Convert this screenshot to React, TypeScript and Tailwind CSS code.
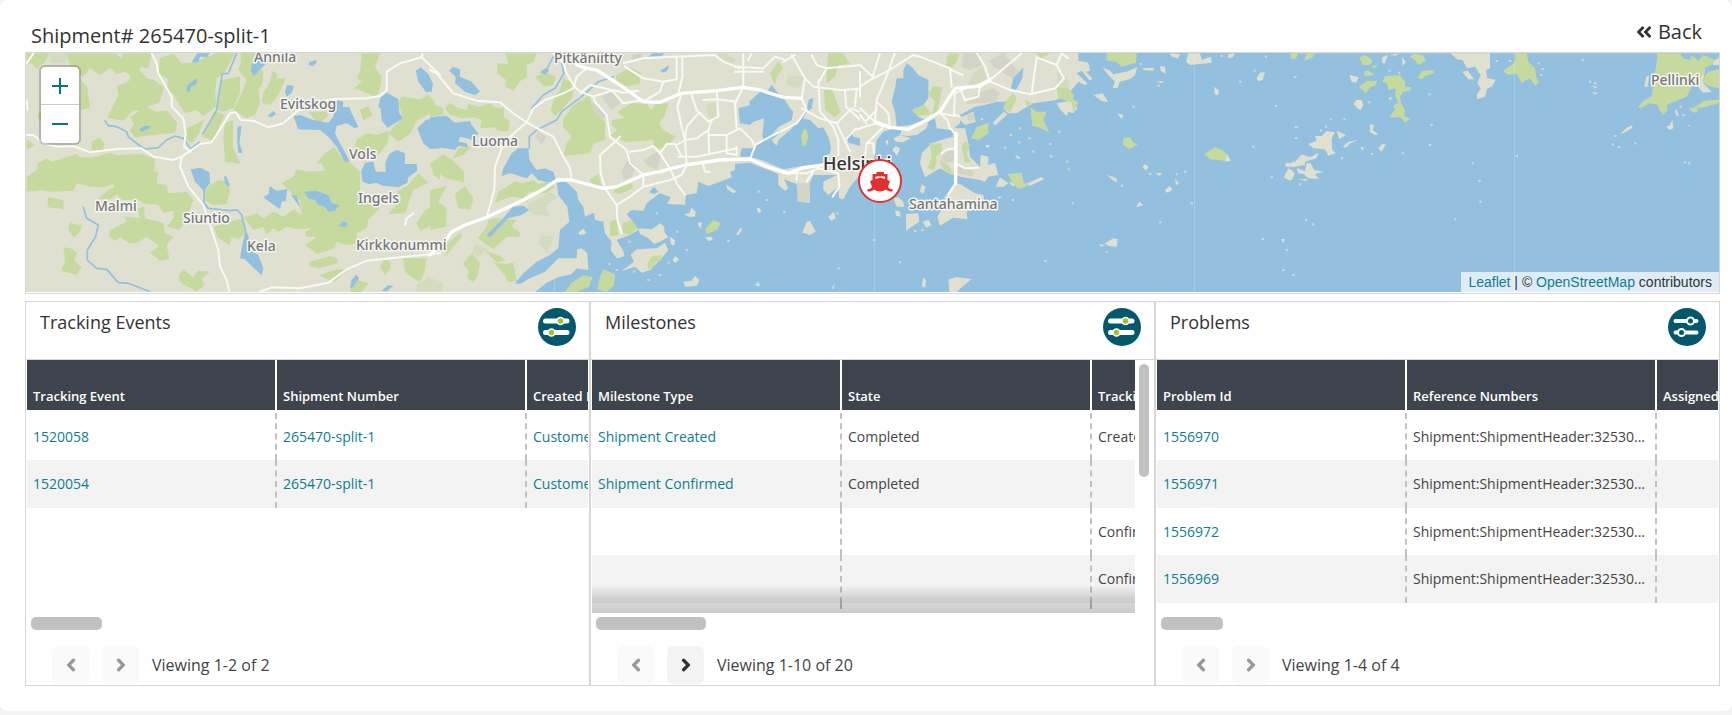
import { useState } from 'react';
import { FaAngleDoubleLeft, FaChevronLeft, FaChevronRight } from 'react-icons/fa';

interface MapTile {
  transform: string;
  water?: string[];
  land?: string[];
  urban?: string[];
  park?: string[];
  forest?: string[];
  lakes?: string[];
  rivers?: string[];
  roads?: string[];
  highways?: string[];
  islets?: number[][];
}

interface Cell {
  text: string;
  link?: boolean;
}

interface GridPanelProps {
  title: string;
  columns: string[];
  rows: Cell[][];
  summary: string;
  filtered?: boolean;
  hasNext?: boolean;
  overflowing?: boolean;
  thumbWidth: string;
}

// every tile is drawn at three units per pixel
const tiles: MapTile[] = [
  {
    transform: 'scale(.33333)',
    forest: [
      '80,160 150,160 135,185 110,207 95,190 80,195',
      '200,160 345,160 365,175 370,160 455,160 445,205 425,200 400,235 375,215 350,222 330,205 300,225 270,205 250,232 215,200 205,185',
      '243,240 262,262 270,325 243,330',
      '350,258 385,245 400,208 425,215 438,235 462,240 492,262 478,308 438,322 432,335 400,330 370,362 322,354 345,305 355,285',
      '390,350 440,320 470,335 500,330 532,370 525,398 485,402 405,412 388,392 402,372',
      '480,175 520,160 545,190 580,187 610,175 650,160 705,160 672,220 650,235 645,282 650,318 610,348 590,330 555,340 520,285 500,265 505,238 475,220',
      '722,160 765,160 760,205 790,210 788,250 775,270 780,310 765,345 740,355 700,330 725,280 740,240 715,210 722,190',
      '665,240 720,230 720,280 700,325 670,335 652,330 655,290',
      '790,278 810,245 818,212 832,222 830,235 857,235 835,285 810,315 785,308',
      '112,340 150,330 165,360 118,362',
      '80,418 105,435 80,450',
      '275,425 300,412 312,428 310,452 275,450',
      '560,385 612,360 598,400 575,430 555,415',
      '608,410 645,332 675,345 660,375 640,422',
      '675,370 698,360 700,400 698,440 722,492 675,485 670,410',
      '80,530 110,510 112,490 140,475 155,485 230,462 240,472 280,472 330,458 350,465 425,462 465,475 462,510 475,520 470,550 500,555 505,580 560,575 580,600 565,640 540,690 500,680 520,655 520,632 490,638 475,615 430,610 415,600 365,600 345,575 340,552 310,562 270,560 230,550 220,572 150,575 130,570 80,575',
      '145,592 190,600 192,628 142,622',
      '325,570 348,558 357,578 330,598 295,597',
      '210,665 222,672 245,675 240,695 222,713 205,688',
      '190,742 212,745 232,760 222,780 245,800 230,825 183,812 195,785',
      '330,690 380,665 375,650 420,655 412,625 432,620 435,655 490,668 495,700 520,710 500,735 508,778 480,782 450,758 478,738 440,710 412,728 390,730 360,712 345,722 327,710',
      '540,820 550,808 580,832 595,812 630,815 605,835 612,858 590,875 545,850 535,835',
      '630,555 655,540 685,545 690,575 680,612 640,615 612,600 615,572',
      '642,680 665,672 730,655 738,700 715,718 695,712 688,735 652,712',
      '730,652 770,640 790,655 820,635 850,650 880,628 905,645 900,600 865,570 845,550 880,530 890,508 925,515 975,512 965,490 950,492 970,465 1002,440 1025,472 1042,480 1080,515 1080,585 1100,605 1140,625 1105,660 1100,685 1070,700 1075,730 1040,735 1010,725 1005,745 950,762 915,735 950,712 920,710 915,695 935,685 890,688 860,680 835,695 820,685 800,705 790,680 760,690 745,670',
      '930,785 990,768 1012,775 1012,790 955,805 928,798',
      '958,825 1010,808 1045,808 1005,845 985,840',
      '1140,800 1155,775 1172,785 1170,808 1155,825',
      '1210,775 1280,775 1275,812 1260,845 1240,835 1215,815',
      '1055,835 1105,850 1085,876 1050,876',
      '925,335 980,335 985,348 955,372',
      '1070,420 1098,400 1130,405 1165,392 1165,425 1140,460 1115,475 1082,475 1060,455',
      '1080,330 1105,318 1118,345 1090,360',
      '1085,160 1140,160 1125,200 1145,230 1142,258 1130,292 1080,270 1060,267 1085,245 1070,235 1080,215',
      '1195,310 1205,290 1260,298 1285,285 1305,305 1302,335 1250,362 1232,400 1195,425 1165,400 1185,375 1210,355',
      '1290,490 1320,470 1320,540 1300,525',
      '1165,642 1205,595 1190,575 1225,555 1255,520 1285,548 1240,570 1225,610 1215,640',
      '1250,670 1275,630 1320,610 1320,665 1260,692',
    ],
    park: ['150,160 200,160 200,190 150,187', '1245,860 1285,830 1320,845 1320,876 1250,876'],
    lakes: [
      '572,508 602,503 628,517 630,550 612,573 585,545',
      '672,530 678,528 690,555 684,560 675,550',
      '735,700 745,705 750,750 775,765 790,805 785,826 757,800 735,778 720,775 725,745',
      '790,592 806,582 808,558 830,572 862,567 858,602 845,605 840,628 818,612',
      '872,583 890,588 902,625 888,605',
      '912,575 950,572 985,585 995,610 1018,615 1005,632 985,635 975,620 955,615 945,600 925,595',
      '1015,677 1030,663 1045,672 1035,682',
      '880,348 900,345 940,360 985,368 1000,350 1012,300 1030,305 1028,320 1048,322 1055,340 1075,380 1065,385 1040,370 1010,378 1005,400 1020,430 1050,485 1035,485 1010,440 985,410 960,390 895,388',
      '1095,488 1120,485 1127,515 1158,515 1155,490 1168,462 1190,450 1215,460 1215,492 1250,492 1252,512 1225,532 1222,548 1195,562 1150,557 1128,548 1108,553 1088,545 1083,515',
      '1142,292 1160,278 1195,297 1198,340 1210,355 1163,383 1145,362 1142,325 1135,320',
      '1252,385 1278,360 1320,348 1320,445 1290,447 1270,430 1262,412',
      '1247,212 1262,202 1285,222 1298,250 1295,272 1280,278 1255,245',
      '928,186 948,180 950,188 938,198 925,195',
      '862,255 882,257 875,278 860,290 855,275',
      '803,347 820,333 828,342 815,352',
      '755,192 780,180 800,188 762,228 753,215',
      '560,272 562,255 592,233 590,252 572,262 570,277',
      '580,178 592,160 628,160 622,172 600,170 595,187 575,187',
      '418,388 432,378 452,378 445,387 425,395',
      '1050,865 1055,840 1068,824 1078,834 1060,860',
      '1145,872 1165,855 1180,858 1160,874',
      '712,380 724,378 722,400 718,430 728,460 715,458 712,430',
    ],
    rivers: [
      '315,362 325,377 350,380 380,395 385,410 412,432 435,447 475,443 500,420 525,408 550,415 572,447 598,427',
      '710,160 685,220 667,222 655,290 650,330 630,365 608,402',
      '250,622 260,655 295,675 287,710 262,750 262,780 290,805 320,808 355,848 385,850 450,875',
      '612,570 612,610 625,625 690,632 712,630 725,645 740,705',
    ],
    roads: [
      '455,160 470,190 475,220 515,290 515,320 550,355 557,400 552,440 572,455',
      '80,405 100,405 130,430 170,440 220,438 270,457 350,447 425,445 460,470 520,480 545,470 600,432 635,427 665,380 690,340 708,337 722,360 760,362 805,382 850,370 890,335 940,310 1000,297 1100,295 1140,288 1160,270 1160,215 1200,190 1265,172 1268,160',
      '1265,172 1320,225',
      '545,470 540,500 565,560 610,615 635,690 655,750 660,800 680,840 688,875',
      '780,875 815,862 900,865 985,848 1040,808 1100,782 1200,772 1320,760',
      '1215,675 1220,655 1240,640',
      '80,190 100,160',
      '80,300 82,330',
    ],
  },
  {
    transform: 'translate(430 40) scale(.33333)',
    water: [
      '315,756 350,728 385,712 425,702 440,685 475,690 472,640 455,625 442,628 440,655 385,655 345,695 300,715 270,732 255,730 280,700 320,665 360,645 385,625 390,570 418,545 412,500 385,465 380,430 405,422 440,455 445,480 460,500 465,530 492,518 495,540 520,545 525,580 545,605 542,630 560,655 580,640 575,625 560,600 600,585 625,570 612,550 590,522 605,510 640,512 650,490 690,460 722,472 712,492 765,494 768,465 800,460 805,425 835,438 870,425 905,412 900,395 915,390 915,372 960,368 1010,388 1045,402 1045,435 1065,452 1075,445 1062,418 1100,432 1105,485 1140,488 1138,432 1150,405 1220,405 1180,425 1180,450 1195,465 1225,440 1227,475 1240,478 1260,440 1290,405 1320,405 1320,756',
      '930,350 935,325 970,325 985,310 1050,270 1075,270 1100,250 1115,235 1140,240 1165,265 1180,262 1195,290 1203,320 1200,340 1180,350 1180,372 1120,378 1060,388 1000,362 960,350',
      '925,205 960,195 958,185 990,155 1010,155 1025,135 1045,160 1065,180 1080,205 1090,215 1085,240 1045,262 1005,310 997,290 1002,235 970,245 960,255 930,250',
    ],
    land: [
      '625,565 665,568 690,550 703,560 703,575 715,592 690,605 672,612 655,595 630,582',
      '575,693 612,665 602,645 620,628 680,625 705,608 715,630 695,655 660,690 635,698 615,680',
      '550,615 580,632 583,648 562,655',
      '445,578 460,566 470,580 450,586',
      '720,590 735,600 733,617 722,612',
      '728,660 735,648 748,658 735,670',
      '760,725 785,722 795,708 808,720 800,738 765,740',
      '762,522 778,520 785,503 797,515 795,530 775,530',
      '802,550 815,547 812,567',
      '825,592 845,590 848,600 835,603',
      '888,433 920,455 910,460 892,448',
      '980,505 990,505 993,515 985,520',
      '1117,578 1130,545 1140,543 1157,575 1140,585 1125,580',
      '1195,530 1212,515 1217,535 1203,542',
      '975,737 983,725 992,738',
      '918,585 932,563 937,568 925,585',
      '1205,745 1215,730 1210,748',
      '1025,300 1060,270 1090,262 1045,300 1040,318',
    ],
    urban: [
      '515,170 545,155 575,185 545,210',
      '470,215 490,190 530,225 500,255',
      '315,290 325,275 350,290 335,315',
      '640,360 680,335 692,350 680,390 650,375',
      '575,395 595,355 618,380 605,410 580,420',
      '1102,430 1138,430 1138,488 1102,485',
      '605,45 635,40 640,55 605,65',
    ],
    park: [
      '290,495 360,455 383,470 345,500 360,530 305,520',
      '825,195 860,185 860,240 840,240',
      '325,610 335,585 372,590 350,640',
      '1070,105 1125,110 1105,145 1070,135',
      '125,640 135,615 172,625 150,650',
      '0,720 40,730 35,756 0,756',
      '855,45 890,40 920,60 905,70',
    ],
    forest: [
      '200,70 235,72 225,40 320,40 312,65 290,75 292,110 272,122 250,152 225,140 228,120 202,100',
      '315,112 345,95 378,110 370,135 345,140',
      '45,205 60,188 85,205 110,210 115,192 150,200 180,190 200,205 222,202 222,230 240,245 235,275 205,272 190,262 150,265 155,240 130,232 95,235 60,225',
      '0,190 40,205 40,225 0,230',
      '5,370 40,343 70,362 102,395 103,428 50,415 10,392',
      '68,355 85,325 125,320 100,345',
      '0,450 50,438 25,485 50,505 48,560 0,570',
      '75,462 105,438 130,475 122,510 85,505',
      '362,210 375,165 390,150 400,115 432,130 428,170 400,205 375,228',
      '400,348 410,310 425,290 400,262 398,240 430,195 480,165 490,215 525,245 525,300 490,310 482,340',
      '545,240 583,235 562,215 605,190 650,192 665,210 678,190 715,190 705,225 688,250 700,270 738,290 720,310 690,328 670,318 670,300 590,307 540,288 562,270 545,255',
      '557,108 600,82 632,100 630,130 595,140 560,125',
      '478,420 505,402 515,440 490,435',
      '548,458 560,440 605,430 610,445 570,462',
      '540,545 560,538 565,585 540,588',
      '577,552 605,538 622,565 600,585 578,578',
      '195,488 205,455 255,425 280,430 310,420 325,432 350,425 376,440 350,460 300,455 280,475 245,470',
      '143,595 170,560 175,540 200,535 258,540 245,560 268,575 270,590 230,590 190,627',
      '50,612 90,578 97,588 45,650',
      '98,672 125,640 150,670 142,710 130,727 112,715 115,690',
      '165,632 215,650 227,662 200,667',
      '190,668 225,672 250,668 260,722 235,727 220,700',
      '1195,40 1240,40 1260,72 1225,75 1215,110 1190,130 1190,90',
      '1182,150 1205,145 1232,215 1215,232 1185,210',
      '1020,100 1045,65 1060,85 1040,110 1035,135',
      '1113,290 1120,268 1130,268 1135,292 1125,320 1117,315',
      '825,568 850,540 873,550 860,570 832,582',
      '652,670 668,648 695,645 695,660 675,668 665,690 655,688',
      '510,710 520,688 555,703 552,735 530,756 502,748',
      '405,756 425,728 460,706 487,712 478,740 440,756',
    ],
    lakes: [
      '215,408 220,385 245,340 265,325 295,325 298,360 320,390 345,385 370,395 378,420 372,430 345,425 325,420 305,400 290,415 265,407 240,400',
      '0,232 50,228 75,248 120,243 125,255 145,280 130,300 90,290 85,305 110,310 115,322 85,318 75,330 45,325 0,320',
      '57,92 70,80 90,88 90,110 125,125 150,155 135,165 105,155 75,130 77,110',
      '330,97 345,85 358,90 345,105',
      '655,50 668,40 705,40 695,48',
      '690,92 718,75 712,92 700,98',
      '1130,210 1137,178 1150,175 1145,205 1133,215',
      '170,585 215,540 248,500 280,497 298,510 275,525 235,535 180,592',
      '657,457 672,440 685,455 672,462',
      '1252,290 1262,275 1270,290 1302,297 1290,318 1255,308',
      '0,120 8,130 5,155 0,155',
    ],
    rivers: [
      '395,70 402,100 375,145 340,165 305,205',
      '370,50 345,97',
      '550,110 505,125 455,170 395,215 380,240 320,270 298,290 298,325',
      '1110,245 1135,205',
    ],
    roads: [
      '0,90 20,100 70,160 140,182 210,187 250,220 290,247 340,275 370,290 395,340 420,385 425,420',
      '290,247 310,205 345,180 400,160 430,145 440,110 470,85',
      '290,247 240,290 215,325 195,380 193,450 170,532',
      '370,40 400,70 410,100 430,135 450,155 490,170 550,150 580,158 625,152',
      '490,170 495,185 530,225 540,290 590,330 600,370 640,405 640,440 600,470 560,495',
      '525,445 512,400 510,345 555,305 570,290',
      '525,445 560,495 562,540 575,580',
      '450,160 480,135 545,150 580,190 640,180',
      '580,70 640,55 735,50 855,45 880,65 930,85',
      '585,80 640,115 700,125 740,118 740,50',
      '700,125 690,155 640,185',
      '757,50 757,110 745,160',
      '755,160 742,200 755,260 765,300 770,375',
      '785,165 800,210 835,245 865,230 860,150',
      '805,220 770,260 765,300 800,295 835,270 845,240',
      '835,270 838,340',
      '838,285 890,285 930,265 965,300 975,320 960,357',
      '890,285 890,340 920,345 920,320',
      '940,40 940,142 915,190 920,265',
      '820,180 860,178 920,185',
      '745,350 800,350 920,325',
      '720,385 740,430 765,465',
      '820,375 825,395 840,395',
      '640,440 720,420 755,405 770,375',
      '600,335 640,330 670,318 690,340 720,385',
      '690,340 710,312 735,312 755,350',
      '765,300 740,315',
      '975,315 1030,285 1100,250 1130,210 1115,175 1125,115 1085,45',
      '1060,65 1095,45',
      '915,80 1000,85 1035,50 1065,60',
      '915,95 1000,95',
      '955,60 965,40',
      '1125,115 1150,140 1230,150 1320,145',
      '1115,205 1170,235 1220,250 1260,335',
      '1165,120 1170,215 1210,260 1225,300 1225,345',
      '1145,45 1160,75 1190,85 1295,75 1300,40',
      '1190,85 1165,130',
      '1245,150 1248,200 1275,225 1320,265',
      '1220,250 1265,205 1320,230',
      '1295,75 1297,180 1320,215',
      '1275,200 1280,145',
      '1250,295 1275,268 1320,265',
      '1060,400 1130,400 1165,385 1225,400 1228,440 1208,470',
      '1100,395 1100,420',
      '1130,425 1150,395',
    ],
    highways: [
      '0,645 45,605 65,575 105,555 170,532 280,480 345,445 380,420 425,420 520,445 560,440 640,405 690,395 765,375 870,360 960,357 1010,380 1075,400 1120,383 1180,375',
      '440,75 470,85 500,90 570,135 640,185 690,187 755,160 860,152 940,142 990,150 1060,172 1115,175',
    ],
    islets: [[598, 605], [680, 520], [770, 630], [985, 455], [1010, 480], [1062, 515], [1225, 685], [1222, 520], [895, 603], [690, 705], [612, 695], [655, 720], [560, 690], [538, 672], [742, 575], [715, 668]],
  },
  {
    transform: 'translate(860 40) scale(.33333)',
    water: ['0,38 1320,38 1320,756 0,756'],
    land: [
      '0,38 655,38 655,62 685,68 690,92 678,95 697,115 690,122 665,92 650,100 682,130 675,135 655,125 630,155 590,180 520,190 490,207 470,220 445,220 430,205 440,185 410,185 375,195 345,200 300,225 300,250 275,270 230,265 225,235 205,245 200,265 170,285 145,288 120,285 125,272 105,265 70,275 50,300 45,345 25,395 0,400',
      '275,265 315,265 325,310 330,350 345,365 360,380 362,345 385,350 385,375 405,368 415,405 385,410 375,425 360,420 310,412 270,402 240,385 215,400 195,412 180,370 185,340 215,310 260,295 280,290',
      '255,470 275,440 285,430 300,432 345,460 370,465 375,500 320,515 322,538 280,533 240,557 232,530 245,510',
      '285,240 340,215 347,245 315,255 300,240',
      '398,248 432,215 443,222 405,257',
      '100,295 120,285 152,295 130,307 108,305',
      '97,330 107,318 120,325 112,348',
      '75,302 85,300 82,318',
      '180,455 185,433 197,440 190,462',
      '100,475 115,472 130,485 133,500 110,500',
      '105,510 120,515 122,530 108,527',
      '138,522 175,520 178,545 155,560 138,572',
      '187,545 205,540 215,555 200,563',
      '408,440 420,412 445,430 430,440',
      '445,425 465,430 460,440',
      '498,432 545,410 552,418 510,437',
      '185,738 190,712 198,720 195,743',
      '268,756 265,718 290,712 335,717 310,737 290,756',
      '590,190 645,180 652,205 640,220 625,215 620,228 600,208',
      '727,82 750,92 760,103 800,95 832,82 825,105 810,117 780,125 772,145 758,143 765,125 745,105',
      '700,165 728,160 745,187 725,183',
      '848,85 880,83 882,92 850,90',
      '900,78 915,80 917,102 902,92',
      '978,65 985,40 1020,40 1025,60 1052,50 1055,68 990,75',
      '930,40 960,42 955,55 935,50',
      '1105,42 1125,40 1118,52 1105,55',
      '1063,140 1077,152 1073,167 1063,160',
      '1190,115 1200,98 1215,97 1208,120 1195,124',
      '742,405 770,415 770,428 755,418',
      '915,450 930,438 937,450 920,458',
      '828,502 838,485 850,495',
      '735,610 760,595 773,598 770,620 745,618',
      '718,612 738,616 722,620',
      '735,633 747,635 738,638',
      '847,380 855,373 865,380 858,392',
      '885,400 905,398 900,408',
      '890,125 912,122 905,130',
      '945,415 957,432 948,434',
      '772,220 790,225 785,238',
      '465,343 483,355 472,357',
      '568,345 578,347 573,355',
      '375,315 390,315 382,325',
      '1275,370 1297,368 1290,382 1278,380',
      '1272,412 1285,385 1305,397 1290,422',
      '1297,362 1320,350 1320,370 1300,370',
      '1263,597 1275,597 1270,610',
      '1100,340 1112,362 1095,365',
      '410,470 427,470 417,476',
      '140,148 155,145 148,158',
    ],
    urban: [
      '305,80 310,40 360,40 370,75 330,90',
      '388,62 430,38 475,95 465,120 440,105 400,78',
      '318,192 350,160 400,145 420,160 405,187',
      '245,360 250,335 285,330 285,362 262,370',
      '285,375 345,395 335,410 290,400',
      '320,225 340,220 345,240 325,245',
    ],
    park: ['325,130 345,95 370,80 380,120 330,140', '590,95 605,95 630,130 620,150 592,145'],
    forest: [
      '790,295 810,292 820,308 833,313 810,328 790,315',
      '1033,342 1065,322 1088,330 1100,345 1095,362 1050,358',
      '443,402 485,398 490,425 503,438 475,447 455,425',
      '513,225 513,203 530,215 560,215 550,240 568,277 535,262 517,258',
      '333,295 350,262 385,248 385,280 355,300',
      '740,38 830,38 828,68 785,80 768,65 740,62',
      '258,78 260,50 270,38 298,42 290,65 275,82',
      '203,162 220,138 247,142 240,180 228,225 215,225 225,185',
      '153,210 195,195 212,222 175,228',
      '208,310 245,310 245,335 228,350 230,365 222,390 203,385 215,350',
      '305,320 315,303 330,315 320,345 332,365 315,368',
      '238,360 265,375 282,405 250,390',
      '430,203 440,180 460,158 470,178 450,217',
      '590,142 625,145 642,165 637,182 655,185 640,220 635,187 595,175',
      '525,38 572,38 545,57',
      '495,180 515,190 500,200',
      '1290,50 1310,38 1315,55',
    ],
    lakes: [
      '453,145 460,115 490,82 487,115 468,150',
      '95,185 105,145 110,115 130,115 130,90 140,70 155,80 175,105 205,120 205,175 190,195 155,210 175,230 195,240 150,255 110,260 105,215',
    ],
    roads: [
      '0,140 30,120 80,95 160,45 180,50 270,85 275,140',
      '105,38 85,95 50,180 45,245',
      '60,38 38,110 0,75',
      '350,38 375,80 390,125 450,150 510,163 585,145 612,115 590,75 530,52 515,160',
      '270,88 308,105',
      '590,75 605,40 625,55',
      '285,145 282,222 300,230',
      '300,145 315,180 355,170 360,135',
      '317,145 285,160',
      '355,135 400,112 485,40',
      '240,220 262,240 270,265 290,285',
      '287,370 315,385 355,383',
      '245,340 262,328 287,325',
      '0,265 50,250 70,262 20,310 15,350',
      '50,185 85,220 90,262',
      '0,205 45,245',
      '0,225 20,250',
      '20,240 50,210',
      '0,95 0,170',
      '20,310 40,310 42,340',
      '287,430 265,465',
      '240,220 285,228',
    ],
    highways: ['45,245 90,262 145,268 200,240 240,215 285,145 360,138 390,120', '288,280 287,430'],
    islets: [[435, 323], [452, 285], [508, 295], [598, 275], [478, 307], [622, 365], [626, 388], [820, 200], [786, 437], [638, 490], [995, 490], [1180, 320], [1247, 198], [1205, 107], [1183, 92], [1217, 50], [1085, 48], [975, 395], [870, 402], [480, 265], [365, 237], [900, 547], [556, 663], [42, 600], [120, 667], [1208, 597], [1270, 690], [1307, 292], [1310, 262], [1235, 412], [1280, 630], [570, 312], [520, 335], [895, 137], [842, 72], [1140, 125], [187, 570], [165, 573], [458, 480], [950, 403]],
  },
  {
    transform: 'translate(1290 0) scale(.33333)',
    water: ['10,160 1290,160 1290,876 10,876'],
    land: [
      '482,160 600,160 600,205 588,210 592,235 617,240 605,260 592,265 585,290 562,297 560,285 572,265 562,250 572,225 555,200 530,205 518,180 500,178',
      '517,215 533,212 552,238 535,238',
      '55,432 80,422 75,408 95,408 110,393 135,397 125,415 127,450 137,460 115,467 105,448 70,445',
      '0,490 15,485 35,463 60,472 85,458 80,475 45,485 45,495 5,502',
      '20,505 45,513 50,490 62,490 72,510 102,515 75,522 87,537 55,535 40,522 25,520',
      '0,508 14,522 5,540 0,538',
      '140,393 168,405 148,417',
      '158,440 175,425 205,420 180,430 168,443',
      '212,440 222,443 217,453',
      '178,225 207,232 198,248 185,245',
      '190,312 198,300 215,300 220,315 212,330 205,328',
      '240,373 252,375 248,390 265,403 255,405 240,397',
      '265,445 275,433 288,433 275,455',
      '276,172 295,165 288,180 285,190 277,190',
      '337,170 347,187 337,197',
      '295,295 305,290 303,302',
      '990,403 1010,383 1028,375 1025,385 1000,400',
      '1128,378 1138,378 1147,360 1150,385 1138,390',
      '1155,330 1160,328 1167,348 1160,347',
      '1063,260 1068,230 1077,228 1073,260',
      '902,258 922,260 918,265',
      '905,277 922,278 918,284',
      '1230,205 1245,205 1240,250 1265,275 1240,278 1225,262',
      '1265,185 1290,172 1290,195 1270,195',
      '10,228 22,230 15,235',
      '12,380 27,378 18,386',
      '25,538 50,537 50,543',
      '1190,375 1203,375 1195,378',
      '300,165 328,160 315,167',
    ],
    forest: [
      '208,172 225,165 247,180 240,195 218,195',
      '222,215 235,210 252,225 225,228',
      '242,200 262,193 255,205',
      '207,260 230,243 262,242 255,258 240,262 228,280',
      '277,245 285,228 330,226 345,245 345,260 363,262 360,272 340,275 330,290 333,308 345,330 343,350 362,355 345,368 332,352 297,352 315,330 310,317 325,308 315,285 318,265 295,270 290,250',
      '360,170 370,162 400,165 407,182 385,195 375,180',
      '383,235 395,213 430,210 432,220 405,228 397,238',
      '640,212 665,195 678,180 675,160 710,160 715,185 735,205 740,235 747,245 737,258 720,235 695,248 680,220 655,225',
      '1103,160 1170,160 1180,175 1200,180 1205,165 1225,182 1240,165 1270,178 1272,190 1245,205 1240,225 1205,260 1190,290 1130,315 1133,328 1120,345 1105,325 1103,315 1080,310 1050,325 1045,320 1060,303 1085,288 1090,255',
      '1235,240 1255,215 1290,207 1290,265 1255,258',
      '1215,320 1240,303 1290,298 1285,310 1230,325',
      '1198,325 1222,320 1222,335 1210,338',
      '0,160 25,160 18,175 5,178',
      '43,182 50,160 75,160 68,172',
    ],
    islets: [[418, 283], [620, 183], [878, 180], [420, 435], [548, 490], [680, 468], [568, 543], [571, 605], [495, 658], [48, 660], [68, 673], [1036, 430], [968, 434], [987, 441], [1185, 487], [1197, 490], [976, 408], [745, 190], [757, 207], [900, 245], [122, 358], [163, 358], [237, 307], [298, 212], [327, 218], [18, 414], [155, 475], [245, 462], [30, 553], [10, 825], [915, 250], [1172, 320], [1180, 345], [338, 460], [424, 375], [660, 183], [753, 225], [108, 380], [92, 392]],
  },
];

const labels = [
  { name: 'Annila', x: 254, y: 62 },
  { name: 'Evitskog', x: 280, y: 109 },
  { name: 'Vols', x: 349, y: 159 },
  { name: 'Ingels', x: 358, y: 203 },
  { name: 'Malmi', x: 95, y: 211 },
  { name: 'Siuntio', x: 183, y: 223 },
  { name: 'Kela', x: 247, y: 251 },
  { name: 'Kirkkonummi', x: 356, y: 250 },
  { name: 'Luoma', x: 472, y: 146 },
  { name: 'Pitkäniitty', x: 554, y: 63 },
  { name: 'Santahamina', x: 909, y: 209 },
  { name: 'Pellinki', x: 1651, y: 85 },
];

const trackingRows: Cell[][] = [
  [{ text: '1520058', link: true }, { text: '265470-split-1', link: true }, { text: 'Customer', link: true }],
  [{ text: '1520054', link: true }, { text: '265470-split-1', link: true }, { text: 'Customer', link: true }],
];

const milestoneRows: Cell[][] = [
  [{ text: 'Shipment Created', link: true }, { text: 'Completed' }, { text: 'Created' }],
  [{ text: 'Shipment Confirmed', link: true }, { text: 'Completed' }, { text: '' }],
  [{ text: '' }, { text: '' }, { text: 'Confirmed' }],
  [{ text: '' }, { text: '' }, { text: 'Confirmed' }],
  [{ text: '' }, { text: '' }, { text: '' }],
];

const problemRows: Cell[][] = ['1556970', '1556971', '1556972', '1556969'].map((id) => [
  { text: id, link: true },
  { text: 'Shipment:ShipmentHeader:32530...' },
  { text: '' },
]);

function Shapes({ points, fill }: { points?: string[]; fill: string }) {
  return (
    <g fill={fill}>
      {points?.map((p) => (
        <polygon key={p} points={p} />
      ))}
    </g>
  );
}

function Lines({ points, stroke, width }: { points?: string[]; stroke: string; width: number }) {
  return (
    <g fill="none" stroke={stroke} strokeWidth={width} strokeLinejoin="round" strokeLinecap="round">
      {points?.map((p) => (
        <polyline key={p} points={p} />
      ))}
    </g>
  );
}

function ShipmentMap() {
  return (
    <section aria-label="Shipment map" className="relative h-[242px] border border-[#d6d6d6] pb-px">
      <svg viewBox="26 53 1693 239" preserveAspectRatio="xMidYMid slice" className="block h-full w-full">
        <rect x="26" y="53" width="1693" height="239" fill="#dfe0d0" />
        {tiles.map((tile) => (
          <g key={tile.transform} transform={tile.transform}>
            <Shapes points={tile.water} fill="#94c0e0" />
            <Shapes points={tile.land} fill="#dfe0d0" />
            <Shapes points={tile.urban} fill="#d4d4c6" />
            <Shapes points={tile.park} fill="#d3dcc0" />
            <Shapes points={tile.forest} fill="#c6da9f" />
            <Shapes points={tile.lakes} fill="#94c0e0" />
            <Lines points={tile.rivers} stroke="#94c0e0" width={5} />
            <Lines points={tile.roads} stroke="#f9f9f5" width={6} />
            <Lines points={tile.highways} stroke="#ffffff" width={10} />
            {tile.islets?.map(([x, y]) => (
              <rect key={`${x}-${y}`} x={x - 3} y={y - 3} width="7" height="6" fill="#d3d9cf" />
            ))}
          </g>
        ))}
        <path d="M554.5 280v12M874.5 195v97M1194.5 53v239M1514.5 53v239" stroke="#ffffff" strokeOpacity=".2" />
        <g
          fontFamily="'Noto Sans', sans-serif"
          fontSize="14"
          fontWeight="500"
          fill="#777777"
          stroke="#f5f5f1"
          strokeWidth="3"
          strokeLinejoin="round"
          style={{ paintOrder: 'stroke' }}
        >
          {labels.map((label) => (
            <text key={label.name} x={label.x} y={label.y}>
              {label.name}
            </text>
          ))}
          <text x="823" y="170" fontSize="18" fill="#333333">
            Helsinki
          </text>
        </g>
        <g transform="translate(880 181)">
          <circle r="21" fill="#ffffff" stroke="#e03131" strokeWidth="2" />
          <path
            fill="#e03131"
            fillRule="evenodd"
            d="M-3.500-9h7.500v2h3.500v6l2.500 1-2 6c1 1.500 2 2 4.500 2.300v2.200c-3 .2-5-.5-6.500-2-3.500 2.600-8.500 2.600-12 0-1.500 1.500-3.500 2.200-6.500 2v-2.200c2.500-.3 3.500-.8 4.500-2.300l-2-6 2.500-1v-6h4zM-4.500-4.500v2.500l4.700-1.500 4.800 1.500v-2.500z"
          />
        </g>
      </svg>

      <div className="absolute left-[13px] top-3 flex w-[42px] flex-col rounded-md border-2 border-black/20 bg-white bg-clip-padding text-[#0b7285]">
        <button type="button" aria-label="Zoom in" className="flex h-[38px] items-center justify-center border-b border-[#cccccc]">
          <svg viewBox="0 0 16 16" className="h-4 w-4" stroke="currentColor" strokeWidth="2">
            <path d="M8 0v16M0 8h16" />
          </svg>
        </button>
        <button type="button" aria-label="Zoom out" className="flex h-[38px] items-center justify-center">
          <svg viewBox="0 0 16 16" className="h-4 w-4" stroke="currentColor" strokeWidth="2">
            <path d="M0 8h16" />
          </svg>
        </button>
      </div>

      <div className="absolute bottom-px right-0 bg-white/70 px-[7px] font-['Liberation_Sans',sans-serif] text-sm leading-5 text-[#333333]">
        <a href="#leaflet" className="text-[#0f7c92]">Leaflet</a> | ©{' '}
        <a href="#osm" className="text-[#0f7c92]">OpenStreetMap</a> contributors
      </div>
    </section>
  );
}

function FilterIcon({ active }: { active?: boolean }) {
  return (
    <svg viewBox="0 0 38 38" className="h-[38px] w-[38px]">
      <circle cx="19" cy="19" r="19" fill="#03586b" />
      <g stroke="#ffffff" strokeLinecap="round" strokeWidth={active ? 5 : 4}>
        <path d={active ? 'M7.500 13h21.500M7.500 24.500h21.500' : 'M7.500 13h21M7.500 24.500h21'} />
      </g>
      <g fill={active ? '#a2c02c' : '#03586b'} stroke="#ffffff" strokeWidth={active ? 1.5 : 2}>
        <circle cx="22.500" cy="13" r="3.500" />
        <circle cx="13.500" cy="24.500" r="3.500" />
      </g>
    </svg>
  );
}

function GridPanel({ title, columns, rows, summary, filtered, hasNext, overflowing, thumbWidth }: GridPanelProps) {
  return (
    <section className="flex min-w-0 flex-col border border-[#d6d6d6]">
      <div className="flex h-[58px] items-start justify-between border-b border-[#d6d6d6] pl-3.5 pr-[13px] pt-1.5">
        <h2 className="text-lg leading-7 text-[#333333]">{title}</h2>
        <button type="button" aria-label={`Filter ${title}`}>
          <FilterIcon active={filtered} />
        </button>
      </div>

      <div className="flex h-[253px] px-px">
        <div className="relative min-w-0 flex-1 overflow-hidden">
          <table className="w-[750px] table-fixed border-separate border-spacing-0 text-left text-sm">
            <thead>
              <tr className="h-[50px] bg-[#3d444d] text-[13px] text-white">
                {columns.map((column) => (
                  <th key={column} className="whitespace-nowrap border-r-2 border-white px-1.5 pb-1 align-bottom font-semibold leading-5">
                    {column}
                  </th>
                ))}
              </tr>
            </thead>
            <tbody className="before:block before:h-[3px]">
              {rows.map((row, i) => (
                <tr key={i} className="odd:h-[47px] even:h-12 odd:bg-white even:bg-[#f3f3f3]">
                  {row.map((cell, j) => (
                    <td key={j} className="border-r-2 border-dashed border-[#c1c1c1] px-1.5 py-0 text-[#444444]">
                      {cell.link ? (
                        <a href="#details" className="text-[#0f7c92]">{cell.text}</a>
                      ) : (
                        cell.text
                      )}
                    </td>
                  ))}
                </tr>
              ))}
            </tbody>
          </table>
          {overflowing && (
            <div className="absolute inset-x-0 bottom-0 h-7 bg-linear-to-b from-transparent via-black/15 to-black/20" />
          )}
        </div>
        {overflowing && (
          <div className="w-[18px] pl-1 pt-1">
            <div className="h-[113px] w-2.5 rounded-full bg-[#c1c1c1]" />
          </div>
        )}
      </div>

      <div className="h-[33px] pl-[5px] pt-1">
        <div className={`h-[13px] rounded-[5px] bg-[#c1c1c1] ${thumbWidth}`} />
      </div>

      <div className="flex items-center pb-px pl-[26px] text-base text-[#444444]">
        <button
          type="button"
          disabled
          aria-label="Previous page"
          className="mr-[13px] flex h-[38px] w-[37px] items-center justify-center rounded-md bg-[#fafafa] text-[#999999]"
        >
          <FaChevronLeft className="h-3.5 w-3.5" strokeWidth={40} />
        </button>
        <button
          type="button"
          disabled={!hasNext}
          aria-label="Next page"
          className={`mr-[13px] flex h-[38px] w-[37px] items-center justify-center rounded-md ${
            hasNext ? 'bg-[#f3f3f3] text-[#333333]' : 'bg-[#fafafa] text-[#999999]'
          }`}
        >
          <FaChevronRight className="h-3.5 w-3.5" strokeWidth={40} />
        </button>
        <span>{summary}</span>
      </div>
    </section>
  );
}

export default function App() {
  const [shipment] = useState('265470-split-1');

  return (
    <div className="min-h-screen bg-[#f3f3f3] font-['Open_Sans',sans-serif]">
      <main className="rounded-lg bg-white pb-[25px] pl-[25px] pr-3 pt-4">
        <header className="flex h-9 items-start justify-between pl-1.5 pr-[18px] text-[#333333]">
          <h1 className="pt-1.5 text-xl leading-7">Shipment# {shipment}</h1>
          <a href="#back" className="flex items-center gap-1.5 pt-0.5 text-xl leading-7">
            <FaAngleDoubleLeft className="h-5 w-4" />
            Back
          </a>
        </header>

        <ShipmentMap />

        <div className="mt-[7px] grid grid-cols-3">
          <GridPanel
            title="Tracking Events"
            columns={['Tracking Event', 'Shipment Number', 'Created By']}
            rows={trackingRows}
            summary="Viewing 1-2 of 2"
            filtered
            thumbWidth="w-[71px]"
          />
          <GridPanel
            title="Milestones"
            columns={['Milestone Type', 'State', 'Tracking Event']}
            rows={milestoneRows}
            summary="Viewing 1-10 of 20"
            filtered
            hasNext
            overflowing
            thumbWidth="w-[110px]"
          />
          <GridPanel
            title="Problems"
            columns={['Problem Id', 'Reference Numbers', 'Assigned To']}
            rows={problemRows}
            summary="Viewing 1-4 of 4"
            thumbWidth="w-[62px]"
          />
        </div>
      </main>
    </div>
  );
}
